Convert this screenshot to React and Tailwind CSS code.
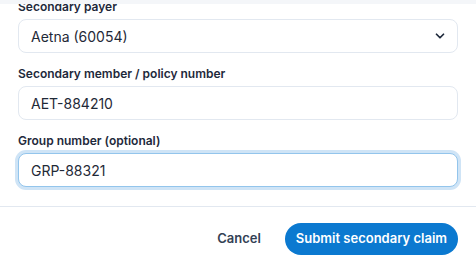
import { ChevronDown } from "lucide-react";

function Field({ label, children, className = "" }) {
  return (
    <div className={className}>
      <label className="block text-[12px] leading-4 font-semibold text-[#1e293b] mb-1">
        {label}
      </label>
      {children}
    </div>
  );
}

export default function App() {
  return (
    <div
      className="relative w-[476px] h-[264px] overflow-hidden bg-white"
      style={{ fontFamily: "Inter, 'Noto Sans', sans-serif" }}
    >
      {/* header edge above scrolled body */}
      <div className="absolute top-0 left-0 right-0 h-[4px] bg-[#f4f6f9] z-10" />

      <div className="px-[18px] -mt-[1px]">
        <Field label="Secondary payer">
          <div className="relative h-[34px] rounded-lg border border-[#e2e8f0] bg-white flex items-center pl-[12px] pr-[10px]">
            <span className="flex-1 text-[14px] text-[#1f2937]">Aetna (60054)</span>
            <ChevronDown className="w-[14px] h-[14px] text-[#1e293b]" strokeWidth={3} />
          </div>
        </Field>

        <Field label="Secondary member / policy number" className="mt-[13px]">
          <div className="h-[34px] rounded-lg border border-[#e2e8f0] bg-white flex items-center px-[12px] text-[14px] text-[#1f2937]">
            AET-884210
          </div>
        </Field>

        <Field label="Group number (optional)" className="mt-[13px]">
          <div className="h-[34px] rounded-lg border border-[#93c5ec] ring-[3px] ring-[#cfe4f6] bg-white flex items-center px-[12px] text-[14px] text-[#1f2937]">
            GRP-88321
          </div>
        </Field>
      </div>

      <div className="mt-[19px] border-t border-[#e2e8f0] flex items-center justify-end gap-[12px] px-[18px] pt-[16px]">
        <button className="px-[12px] h-[32px] text-[13px] font-semibold text-[#334155]">
          Cancel
        </button>
        <button className="h-[32px] px-[11px] rounded-full bg-[#0b79d0] text-white text-[13px] font-semibold">
          Submit secondary claim
        </button>
      </div>
    </div>
  );
}
